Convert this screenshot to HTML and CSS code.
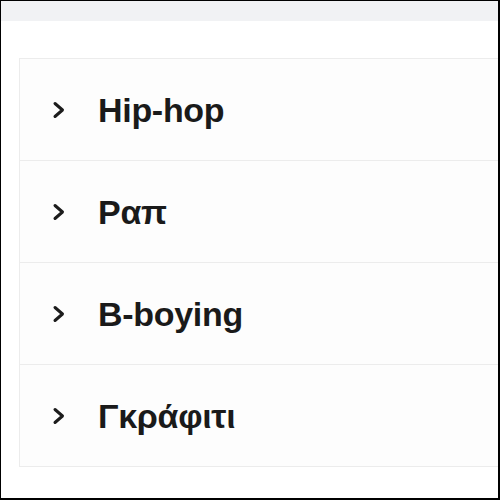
FILE: index.html
```html
<!DOCTYPE html>
<html>
<head>
<meta charset="utf-8">
<link rel="stylesheet" href="styles.css">
</head>
<body>
<div class="frame">
  <div class="topbar"></div>
  <div class="content">
    <div class="accordion">
      <div class="row">
        <svg class="chev" viewBox="0 0 14 18"><path d="M4 2.5 L11.5 9 L4 15.5" fill="none" stroke="#1c1c1c" stroke-width="3" stroke-linecap="round" stroke-linejoin="round"/></svg>
        <span class="label">Hip-hop</span>
      </div>
      <div class="row">
        <svg class="chev" viewBox="0 0 14 18"><path d="M4 2.5 L11.5 9 L4 15.5" fill="none" stroke="#1c1c1c" stroke-width="3" stroke-linecap="round" stroke-linejoin="round"/></svg>
        <span class="label">Ραπ</span>
      </div>
      <div class="row">
        <svg class="chev" viewBox="0 0 14 18"><path d="M4 2.5 L11.5 9 L4 15.5" fill="none" stroke="#1c1c1c" stroke-width="3" stroke-linecap="round" stroke-linejoin="round"/></svg>
        <span class="label">B-boying</span>
      </div>
      <div class="row">
        <svg class="chev" viewBox="0 0 14 18"><path d="M4 2.5 L11.5 9 L4 15.5" fill="none" stroke="#1c1c1c" stroke-width="3" stroke-linecap="round" stroke-linejoin="round"/></svg>
        <span class="label">Γκράφιτι</span>
      </div>
    </div>
  </div>
</div>
</body>
</html>
```
FILE: styles.css
```css
html, body {
  margin: 0;
  padding: 0;
  background: #ffffff;
}
.frame {
  width: 500px;
  height: 500px;
  box-sizing: border-box;
  border-style: solid;
  border-color: #000;
  border-width: 1px 2px 2px 1px;
  overflow: hidden;
  background: #ffffff;
  font-family: "Liberation Sans", Arial, sans-serif;
}
.topbar {
  height: 20px;
  background: #f1f2f4;
}
.content {
  padding: 37px 0 0 18px;
}
.accordion {
  width: 520px;
  border: 1px solid #ececec;
  background: #fdfdfd;
}
.row {
  height: 101px;
  display: flex;
  align-items: center;
  border-bottom: 1px solid #ececec;
  padding-left: 31px;
}
.row:last-child {
  border-bottom: none;
}
.chev {
  width: 14px;
  height: 18px;
  flex: none;
}
.label {
  margin-left: 33px;
  font-size: 34px;
  font-weight: bold;
  color: #1a1a1a;
  line-height: 1;
  letter-spacing: -0.3px;
}
```
